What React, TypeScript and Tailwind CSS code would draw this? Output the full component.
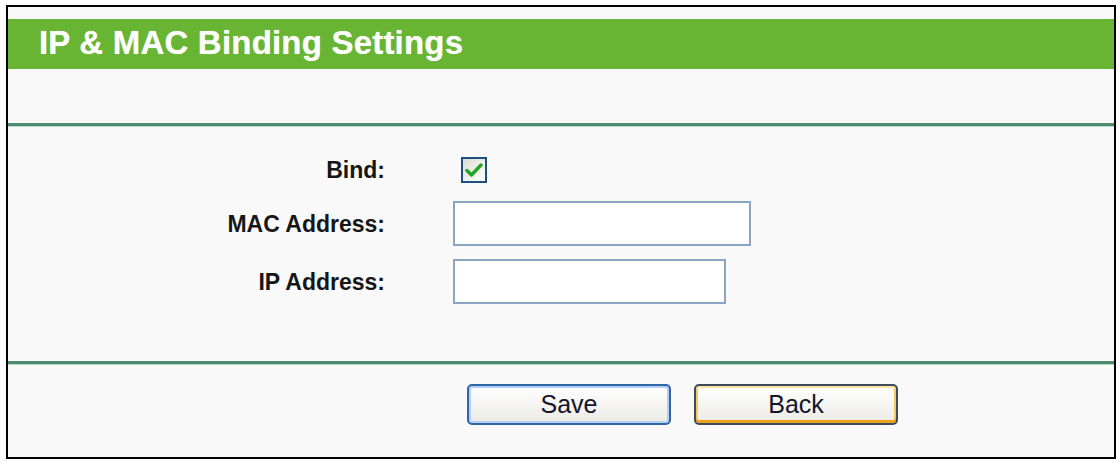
import React from "react"

const font = { fontFamily: '"Liberation Sans", Arial, sans-serif' }

function Divider() {
  return (
    <div>
      <div className="h-[3px] bg-[#4c8b6b]" />
      <div className="h-[1px] bg-[#b7d8c4]" />
    </div>
  )
}

function Label({ children, top }: { children: React.ReactNode; top: string }) {
  return (
    <div className={`w-[377px] shrink-0 text-right text-[23px] font-bold leading-none text-[#161616] ${top}`}>
      {children}
    </div>
  )
}

export default function App() {
  return (
    <div className="h-[462px] w-[1118px] bg-white pl-[6px] pt-[5px]" style={font}>
      <div className="h-[454px] w-[1110px] border-2 border-black bg-[#f9f9f9] pt-[12px]">
        <div className="h-[50px] bg-[#67b532] pl-[31px] pt-[7px] text-[33px] font-bold leading-none tracking-[0.2px] text-white [text-shadow:0_0_1px_rgba(255,255,255,0.6)]">
          IP &amp; MAC Binding Settings
        </div>
        <div className="h-[54px]" />
        <Divider />

        <div className="pt-[27px]">
          <div className="flex items-start gap-[68px]">
            <Label top="mt-[5px]">Bind:</Label>
            <div className="ml-[8px] mt-[3px] flex h-[26px] w-[26px] items-center justify-center border-2 border-[#1c5180] bg-gradient-to-br from-[#dcdcd6] to-[#ffffff]">
              <svg width="18" height="16" viewBox="0 0 18 16">
                <path d="M2 8.5 L6.5 13 L16 3" fill="none" stroke="#22a622" strokeWidth="3.4" strokeLinecap="round" strokeLinejoin="round" />
              </svg>
            </div>
          </div>

          <div className="mt-[18px] flex items-start gap-[68px]">
            <Label top="mt-[12px]">MAC Address:</Label>
            <div className="h-[45px] w-[298px] border-2 border-[#8aa4c2] bg-white" />
          </div>

          <div className="mt-[13px] flex items-start gap-[68px]">
            <Label top="mt-[12px]">IP Address:</Label>
            <div className="h-[45px] w-[273px] border-2 border-[#8aa4c2] bg-white" />
          </div>
        </div>

        <div className="h-[57px]" />
        <Divider />

        <div className="flex gap-[23px] pl-[459px] pt-[19px]">
          <button
            type="button"
            className="h-[41px] w-[204px] rounded-[5px] border-2 border-[#3265a8] bg-gradient-to-b from-[#ffffff] to-[#ebeae5] text-[25px] leading-none text-[#14142a] shadow-[inset_0_0_0_2px_#b4cff5]"
            style={font}
          >
            Save
          </button>
          <button
            type="button"
            className="h-[41px] w-[204px] rounded-[5px] border-2 border-[#3c4d60] bg-gradient-to-b from-[#ffffff] to-[#ecebe6] text-[25px] leading-none text-[#14142a] shadow-[inset_0_2px_0_#fde3a0,inset_0_-3px_0_#eea21c,inset_2px_0_0_#f8c95e,inset_-2px_0_0_#f8c95e]"
            style={font}
          >
            Back
          </button>
        </div>
      </div>
    </div>
  )
}
